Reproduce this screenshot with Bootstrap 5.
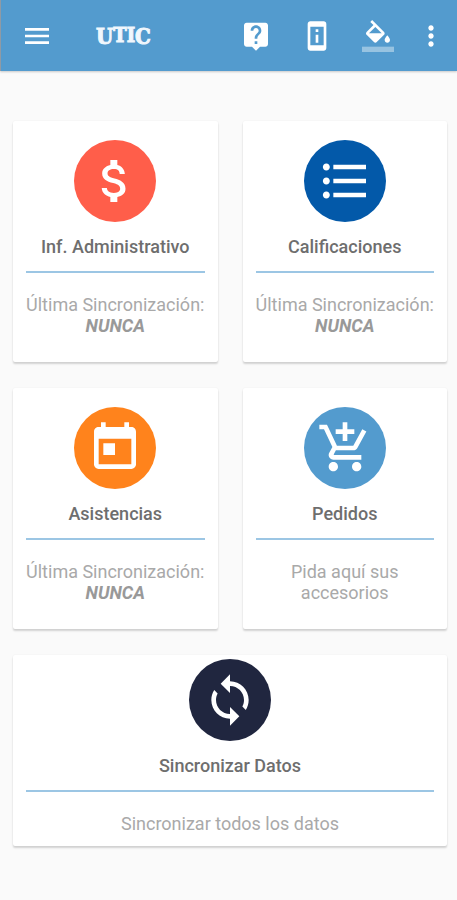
<!DOCTYPE html>
<html lang="es">
<head>
<meta charset="utf-8">
<meta name="viewport" content="width=device-width, initial-scale=1">
<title>UTIC</title>
<link href="https://cdn.jsdelivr.net/npm/bootstrap@5.3.0/dist/css/bootstrap.min.css" rel="stylesheet">
<style>
body { background: #fafafa; font-family: Roboto, "Liberation Sans", sans-serif; color: #757575; }
.topbar { background: #539bce; height: 71px; padding: 0 10px 0 20px; border-left: 1px solid #8f9aa5; box-shadow: 0 1px 2px rgba(0,0,0,.2); }
.topbar svg { width: 32px; height: 32px; fill: #fff; display: block; }
.brand-word { font: bold 20px/1 "DejaVu Serif Condensed", "DejaVu Serif", serif; color: #f0f7fd; margin-left: 43px; -webkit-text-stroke: 1px #f0f7fd; }
.brand-tall { font-size: 22px; }
.actions { gap: 29px; margin-right: 21px; }
.tiles { padding: 50px 10px 50px 13px; }
.tile-grid { display: grid; grid-template-columns: 1fr 1fr; gap: 26px 25px; }
.tile { background: #fff; border-radius: 2px; box-shadow: 0 2px 2px rgba(0,0,0,.16), 0 0 2px rgba(0,0,0,.06); padding: 19px 13px 26px; color: #a9a9a9; }
.tile:hover { color: #a9a9a9; }
.tile-wide { grid-column: 1 / -1; padding: 4px 13px 12px; }
.disc { width: 82px; height: 82px; }
.disc svg { width: 56px; height: 56px; fill: #fff; }
.disc-red { background: #ff5e4a; }
.disc-navy { background: #0359a9; }
.disc-orange { background: #ff831c; }
.disc-sky { background: #539bce; }
.disc-dark { background: #20263f; }
.tile h2 { font-size: 18px; line-height: 22px; font-weight: 500; color: #6e6e6e; margin: 14px 0 13px; }
.tile hr { height: 2px; border: 0; background: #9cc6e4; opacity: 1; margin: 0 0 21px; }
.tile p { font-size: 18px; line-height: 21px; margin: 0; }
.tile em { font-weight: 700; color: #999; }
</style>
<script src="https://cdn.jsdelivr.net/npm/bootstrap@5.3.0/dist/js/bootstrap.bundle.min.js"></script>
</head>
<body>
<header class="topbar d-flex align-items-center">
  <button type="button" class="btn p-0 border-0" aria-label="Menú"><svg viewBox="0 0 24 24"><path d="M3 18h18v-2H3v2zm0-5h18v-2H3v2zm0-7v2h18V6H3z"/></svg></button>
  <span class="brand-word d-flex align-items-start"><span class="brand-tall">U</span><span>TI</span><span class="brand-tall">C</span></span>
  <div class="actions d-flex align-items-center ms-auto">
    <button type="button" class="btn p-0 border-0" aria-label="Ayuda"><svg viewBox="0 0 24 24"><path d="M19 2H5c-1.100 0-2 .9-2 2v14c0 1.100.9 2 2 2h4l3 3 3-3h4c1.100 0 2-.9 2-2V4c0-1.100-.9-2-2-2zm-6 16h-2v-2h2v2zm2.070-7.750l-.9.920C13.450 11.900 13 12.500 13 14h-2v-.5c0-1.100.45-2.100 1.170-2.830l1.240-1.260c.37-.36.59-.86.59-1.410 0-1.100-.9-2-2-2s-2 .9-2 2H8c0-2.210 1.790-4 4-4s4 1.790 4 4c0 .88-.36 1.680-.93 2.250z"/></svg></button>
    <button type="button" class="btn p-0 border-0" aria-label="Información"><svg viewBox="0 0 24 24"><path d="M13 7h-2v2h2V7zm0 4h-2v6h2v-6zm4-9.990L7 1c-1.100 0-2 .9-2 2v18c0 1.100.9 2 2 2h10c1.100 0 2-.9 2-2V3c0-1.100-.9-1.990-2-1.990zM17 19H7V5h10v14z"/></svg></button>
    <button type="button" class="btn p-0 border-0" aria-label="Color"><svg viewBox="0 0 24 24"><path d="M16.560 8.940L7.620 0 6.210 1.410l2.380 2.380-5.150 5.150c-.59.59-.59 1.540 0 2.120l5.500 5.500c.29.29.68.44 1.060.44s.77-.15 1.060-.44l5.500-5.500c.59-.58.59-1.530 0-2.120zM5.210 10L10 5.210 14.790 10H5.210zM19 11.500s-2 2.170-2 3.500c0 1.100.9 2 2 2s2-.9 2-2c0-1.330-2-3.500-2-3.500z"/><path fill-opacity=".4" d="M0 20h24v4H0v-4z"/></svg></button>
  </div>
  <button type="button" class="btn p-0 border-0" aria-label="Más opciones"><svg viewBox="0 0 24 24"><path d="M12 8c1.100 0 2-.9 2-2s-.9-2-2-2-2 .9-2 2 .9 2 2 2zm0 2c-1.100 0-2 .9-2 2s.9 2 2 2 2-.9 2-2-.9-2-2-2zm0 6c-1.100 0-2 .9-2 2s.9 2 2 2 2-.9 2-2-.9-2-2-2z"/></svg></button>
</header>
<main class="tiles">
  <div class="tile-grid">
    <a href="#administrativo" class="tile d-block text-center text-decoration-none">
      <div class="disc disc-red rounded-circle d-flex align-items-center justify-content-center mx-auto"><svg viewBox="0 0 24 24"><path d="M11.800 10.900c-2.270-.59-3-1.200-3-2.150 0-1.090 1.010-1.850 2.700-1.850 1.780 0 2.440.85 2.500 2.100h2.210c-.07-1.720-1.120-3.300-3.210-3.810V3h-3v2.160c-1.940.42-3.500 1.680-3.500 3.610 0 2.310 1.910 3.460 4.700 4.130 2.500.6 3 1.480 3 2.410 0 .69-.49 1.790-2.700 1.790-2.060 0-2.870-.92-2.980-2.100h-2.200c.12 2.190 1.760 3.420 3.680 3.830V21h3v-2.150c1.950-.37 3.500-1.500 3.500-3.550 0-2.840-2.430-3.810-4.700-4.400z"/></svg></div>
      <h2>Inf. Administrativo</h2>
      <hr>
      <p>Última Sincronización: <em>NUNCA</em></p>
    </a>
    <a href="#calificaciones" class="tile d-block text-center text-decoration-none">
      <div class="disc disc-navy rounded-circle d-flex align-items-center justify-content-center mx-auto"><svg viewBox="0 0 24 24"><path d="M4 10.500c-.83 0-1.500.67-1.500 1.500s.67 1.500 1.500 1.500 1.500-.67 1.500-1.500-.67-1.500-1.500-1.500zm0-6c-.83 0-1.500.67-1.500 1.500S3.170 7.500 4 7.500 5.500 6.830 5.500 6 4.830 4.500 4 4.500zm0 12c-.83 0-1.500.68-1.500 1.500s.68 1.500 1.500 1.500 1.500-.68 1.500-1.500-.67-1.500-1.500-1.500zM7 19h14v-2H7v2zm0-6h14v-2H7v2zm0-8v2h14V5H7z"/></svg></div>
      <h2>Calificaciones</h2>
      <hr>
      <p>Última Sincronización: <em>NUNCA</em></p>
    </a>
    <a href="#asistencias" class="tile d-block text-center text-decoration-none">
      <div class="disc disc-orange rounded-circle d-flex align-items-center justify-content-center mx-auto"><svg viewBox="0 0 24 24"><path d="M19 3h-1V1h-2v2H8V1H6v2H5c-1.110 0-1.990.9-1.990 2L3 19c0 1.100.89 2 2 2h14c1.100 0 2-.9 2-2V5c0-1.100-.9-2-2-2zm0 16H5V8h14v11zM7 10h5v5H7z"/></svg></div>
      <h2>Asistencias</h2>
      <hr>
      <p>Última Sincronización: <em>NUNCA</em></p>
    </a>
    <a href="#pedidos" class="tile d-block text-center text-decoration-none">
      <div class="disc disc-sky rounded-circle d-flex align-items-center justify-content-center mx-auto"><svg viewBox="0 0 24 24"><path d="M11 9h2V6h3V4h-3V1h-2v3H8v2h3v3zm-4 9c-1.100 0-1.990.9-1.990 2S5.900 22 7 22s2-.9 2-2-.9-2-2-2zm10 0c-1.100 0-1.990.9-1.990 2s.89 2 1.990 2 2-.9 2-2-.9-2-2-2zm-9.830-3.250l.03-.12.9-1.630h7.450c.75 0 1.410-.41 1.750-1.030l3.860-7.010L19.420 4h-.01l-1.100 2-2.760 5H8.530l-.13-.27L6.160 6l-.95-2-.94-2H1v2h2l3.600 7.590-1.350 2.450c-.16.28-.25.61-.25.96 0 1.100.9 2 2 2h12v-2H7.420c-.13 0-.25-.11-.25-.25z"/></svg></div>
      <h2>Pedidos</h2>
      <hr>
      <p>Pida aquí sus<br>accesorios</p>
    </a>
    <a href="#sincronizar" class="tile tile-wide d-block text-center text-decoration-none">
      <div class="disc disc-dark rounded-circle d-flex align-items-center justify-content-center mx-auto"><svg viewBox="0 0 24 24"><path d="M12 4V1L8 5l4 4V6c3.310 0 6 2.690 6 6 0 1.010-.25 1.970-.7 2.800l1.460 1.460C19.540 15.030 20 13.570 20 12c0-4.420-3.580-8-8-8zm0 14c-3.310 0-6-2.690-6-6 0-1.010.25-1.970.7-2.800L5.240 7.740C4.460 8.970 4 10.430 4 12c0 4.420 3.580 8 8 8v3l4-4-4-4v3z"/></svg></div>
      <h2>Sincronizar Datos</h2>
      <hr>
      <p>Sincronizar todos los datos</p>
    </a>
  </div>
</main>
</body>
</html>
